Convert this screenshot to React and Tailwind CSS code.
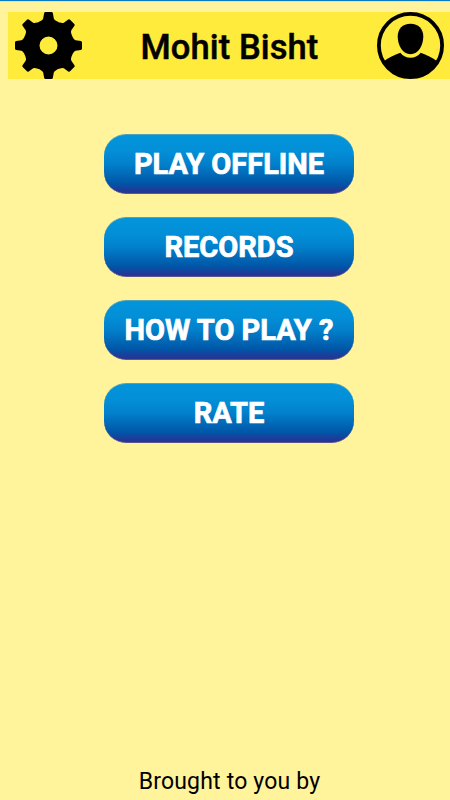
import React from "react";

const menuItems = ["PLAY OFFLINE", "RECORDS", "HOW TO PLAY ?", "RATE"];
const teeth = [0, 45, 90, 135, 180, 225, 270, 315];

function GearIcon() {
  return (
    <svg viewBox="-33.5 -33.5 67 67" className="w-[67px] h-[67px]">
      {teeth.map((angle) => (
        <path
          key={angle}
          transform={`rotate(${angle})`}
          d="M-3 -33.5H3Q4.1 -33.5 4.4 -32.3L5.3 -27Q5.7 -25.4 8 -24.4Q9 -23.8 9.8 -23.6L9 -9.5H-9L-9.8 -23.6Q-9 -23.8 -8 -24.4Q-5.7 -25.4 -5.3 -27L-4.4 -32.3Q-4.1 -33.5 -3 -33.5Z"
        />
      ))}
      <circle r="16.8" fill="none" stroke="#000" strokeWidth="15.6" />
    </svg>
  );
}

function ProfileIcon() {
  return (
    <svg viewBox="0 0 67 67" className="w-[67px] h-[67px]">
      <circle cx="33.5" cy="33.5" r="31.6" fill="none" stroke="#000" strokeWidth="3.8" />
      {/* Head */}
      <path d="M33.5 11.7C41.5 11.7 46.3 17 46.3 24.5C46.3 33.5 41.3 42.2 33.5 42.2C25.7 42.2 20.7 33.5 20.7 24.5C20.7 17 25.5 11.7 33.5 11.7Z" />
      {/* Shoulders */}
      <path d="M23.3 40.8C26 44.2 29.5 45.8 33.5 45.8C37.5 45.8 41 44.2 43.7 40.8C49.5 43.2 55.5 45.3 60.5 49.5A31.6 31.6 0 0 1 6.5 49.5C11.5 45.3 17.5 43.2 23.3 40.8Z" />
    </svg>
  );
}

export default function App() {
  return (
    <div className="flex h-[800px] w-[450px] flex-col overflow-hidden border-t border-[#0a7ac4] bg-[#fff49c] font-['Roboto',sans-serif] text-black shadow-[inset_0_1px_0_#dfe3ac]">

      {/* HEADER */}
      <header className="mt-[11px] ml-2 flex h-[67px] shrink-0 items-center justify-between bg-[#ffeb3b] pr-[6px] pl-[7px]">
        <button aria-label="Settings">
          <GearIcon />
        </button>
        <h1 className="whitespace-nowrap pt-[3px] text-[34.5px] leading-none font-medium tracking-[0.1px] [-webkit-text-stroke:0.5px_#000]">
          Mohit Bisht
        </h1>
        <button aria-label="Profile">
          <ProfileIcon />
        </button>
      </header>

      {/* MENU */}
      <nav className="mt-[55px] ml-2 flex flex-col items-center gap-[23px]">
        {menuItems.map((item) => (
          <button
            key={item}
            className="h-[60px] w-[250px] rounded-[22px] border-y border-t-[#4fa3b8] border-b-[#5b5690] bg-[linear-gradient(to_bottom,#0295dc_0%,#028fd7_28%,#0280cb_50%,#0055a6_84%,#243696_97%)] text-[29px] leading-none font-bold whitespace-nowrap text-white [-webkit-text-stroke:0.7px_#fff]"
          >
            {item}
          </button>
        ))}
      </nav>

      <footer className="mt-auto ml-2 pb-[4px] pl-px text-center text-[23px] leading-[28px] tracking-[0.18px]">
        Brought to you by
      </footer>
    </div>
  );
}
